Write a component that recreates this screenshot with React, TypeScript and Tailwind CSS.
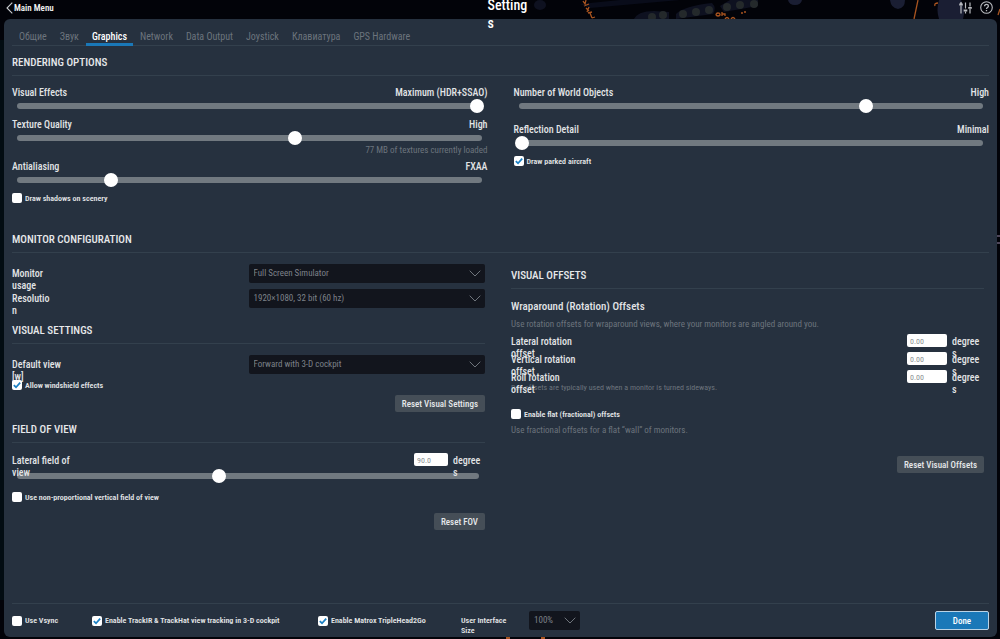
import { useId, useState, type ReactNode } from "react";

const tabs = ["Общие", "Звук", "Graphics", "Network", "Data Output", "Joystick", "Клавиатура", "GPS Hardware"];

function Heading({ children }: { children: ReactNode }) {
  return (
    <h2 className="flex h-[30px] items-center border-b border-[#33404d] pt-1.5 text-[11px] font-medium uppercase text-[#e6e8ea]">
      {children}
    </h2>
  );
}

function Track({ id, label, start }: { id?: string; label?: string; start: number }) {
  const [value, setValue] = useState(start);
  return (
    <div className="ml-px mr-1 grid h-3.5 items-center">
      <span className="col-start-1 row-start-1 ml-1 mr-0.5 h-1.5 rounded-full bg-[#717980]" />
      <input
        id={id}
        aria-label={label}
        type="range"
        min={0}
        max={1000}
        value={value}
        onChange={(e) => setValue(Number(e.target.value))}
        className="z-10 col-start-1 row-start-1 h-3.5 w-full appearance-none bg-transparent [&::-webkit-slider-thumb]:size-3.5 [&::-webkit-slider-thumb]:appearance-none [&::-webkit-slider-thumb]:rounded-full [&::-webkit-slider-thumb]:bg-white"
      />
    </div>
  );
}

function Slider({ label, value, start }: { label: string; value: string; start: number }) {
  const id = useId();
  return (
    <div>
      <div className="flex h-3.5 items-end justify-between text-[10px] font-medium leading-3 text-[#e2e4e6]">
        <label htmlFor={id}>{label}</label>
        <output htmlFor={id}>{value}</output>
      </div>
      <Track id={id} start={start} />
    </div>
  );
}

function Check({ label, on = false }: { label: string; on?: boolean }) {
  const [checked, setChecked] = useState(on);
  return (
    <label className="flex h-2.5 w-fit items-center gap-[3px] whitespace-nowrap text-[8px] font-semibold leading-[10px] text-[#e2e4e6]">
      <span className="grid size-2.5">
        <input
          type="checkbox"
          checked={checked}
          onChange={(e) => setChecked(e.target.checked)}
          className="col-start-1 row-start-1 size-2.5 appearance-none rounded-xs bg-white"
        />
        {checked && (
          <svg viewBox="0 0 10 10" className="pointer-events-none z-10 col-start-1 row-start-1 size-2.5" aria-hidden="true">
            <path d="M1.8 5.2 4 7.2 8.2 2.6" fill="none" stroke="#1b80c4" strokeWidth="1.7" />
          </svg>
        )}
      </span>
      <span className="pt-px">{label}</span>
    </label>
  );
}

function Drop({ id, value }: { id: string; value: string }) {
  return (
    <div className="grid h-[19px] items-center">
      <select
        id={id}
        className="col-start-1 row-start-1 h-[19px] w-full appearance-none rounded-xs bg-[#12151d] pl-[5px] pr-5 text-[9px] leading-[19px] text-[#7d8289]"
      >
        <option>{value}</option>
      </select>
      <svg viewBox="0 0 12 7" className="pointer-events-none z-10 col-start-1 row-start-1 mr-1 h-[7px] w-3 justify-self-end" aria-hidden="true">
        <path d="M.7.7 6 6 11.3.7" fill="none" stroke="#6f757c" strokeWidth="1" />
      </svg>
    </div>
  );
}

function SelectRow({ label, value }: { label: string; value: string }) {
  const id = useId();
  return (
    <div className="flex h-[25px] items-start justify-between">
      <label htmlFor={id} className="w-[54px] pt-1 text-[10px] font-medium leading-3 text-[#e2e4e6]">
        {label}
      </label>
      <div className="w-1/2">
        <Drop id={id} value={value} />
      </div>
    </div>
  );
}

function Degrees({ label, value, narrow = false }: { label: string; value: string; narrow?: boolean }) {
  const id = useId();
  return (
    <div
      className={
        narrow
          ? "relative z-20 flex h-4 items-start text-[10px] font-medium leading-3 text-[#e2e4e6]"
          : "flex h-[18px] items-start text-[10px] font-medium leading-3 text-[#e2e4e6]"
      }
    >
      <label htmlFor={id} className="w-[70px] pt-0.5">
        {label}
      </label>
      <input
        id={id}
        defaultValue={value}
        className={
          narrow
            ? "ml-auto h-[13px] w-[34px] rounded-xs bg-white px-[3px] pt-px text-[8px] font-normal text-[#8b8f93]"
            : "ml-auto h-[13px] w-10 rounded-xs bg-white px-[3px] pt-px text-[8px] font-normal text-[#8b8f93]"
        }
      />
      <span className="ml-[5px] w-8 pt-0.5">
        <span className="block w-[30px] wrap-anywhere">degrees</span>
      </span>
    </div>
  );
}

function Reset({ children }: { children: ReactNode }) {
  return (
    <button type="button" className="ml-auto block h-[17px] rounded-xs bg-[#454e57] px-[7px] text-[9px] font-medium leading-[18px] text-[#e6e8ea]">
      {children}
    </button>
  );
}

function Cockpit() {
  return (
    <svg viewBox="0 0 1000 639" preserveAspectRatio="none" className="absolute inset-0 size-full" aria-hidden="true">
      <rect width="1000" height="639" fill="#020309" />
      <path d="M0 40h4v560H0z" fill="#020c12" />
      <path d="M590 8 680 0h-60l-40 4z" fill="#090c1a" />
      <g fill="#0e1120">
        <ellipse cx="540" cy="5" rx="6" ry="5" />
        <path d="M634 19q4-8 20-8l15 1v7zM676 14q8-8 36-11 5 5 1 11l-37 5zM720 6l10-6h28v6l-34 6z" />
      </g>
      <g fill="#24292b">
        <circle cx="652" cy="17" r="4" />
        <circle cx="663" cy="15" r="4" />
        <circle cx="683" cy="14" r="4" />
        <circle cx="696" cy="12" r="4" />
        <circle cx="709" cy="10" r="4" />
        <circle cx="727" cy="7" r="4" />
        <circle cx="740" cy="5" r="4" />
        <circle cx="754" cy="4" r="4" />
      </g>
      <g fill="#1a1e33">
        <path d="M788 0h14q-1 5-7 5t-7-5zM890 0h15q0 8-7 9-7-1-8-9zM939 0h22q5 10 2 19h-24q-3-9 0-19z" />
      </g>
      <g fill="none" stroke="#a85420" strokeWidth="1.3">
        <path d="M583 1l2 3 1-4M584 6l5-2M586 8l3 3M589 7l-2 5M588 13l4-1M590 13l2 5M592 18l3-1" />
        <path d="M718 13a2 1.500 0 1 0 .1 0M722 16v-4M722 14h3v2M741 13h2M744 12h2M725 19q2-3 4 0M731 19q2-3 4 0" />
        <path d="M918 0l-4 19M935 6q-1-3 3-3M1000 9l-2 6" />
      </g>
      <path d="M996 236h4M997 243h3" stroke="#9b8bab" />
      <path d="M506 638h4M541 638h4" stroke="#a85420" strokeWidth="2" />
    </svg>
  );
}

export default function App() {
  return (
    <div className="relative flex min-h-screen flex-col bg-[#020309] pb-0.5 pl-1 pr-[3px] font-['Roboto_Condensed','Roboto',sans-serif] antialiased">
      <Cockpit />
      <header className="relative z-20 flex h-[19px] items-start">
        <a href="#main" className="flex h-4 flex-1 items-center gap-px pl-0.5 text-[9px] font-semibold text-[#f0f1f2]">
          <svg viewBox="0 0 7 12" className="h-3 w-[7px]" aria-hidden="true">
            <path d="M6.3.6 1 6l5.3 5.4" fill="none" stroke="#c9ccd0" strokeWidth="1.1" />
          </svg>
          <span className="pt-px">Main Menu</span>
        </a>
        <h1 className="-mt-1 w-6">
          <span className="block w-[42px] text-sm font-medium leading-[18px] text-white wrap-anywhere">Settings</span>
        </h1>
        <div className="flex h-[15px] flex-1 items-center justify-end gap-2 pr-1 text-[#b9bbc0]">
          <button type="button" aria-label="Quick settings">
            <svg viewBox="0 0 13 12" className="block h-3 w-[13px]" fill="none" stroke="currentColor" aria-hidden="true">
              <path d="M2 3.500V11.500M6.500 .5v6M6.500 9.500v2M11 .5v4M11 7v4.500" strokeWidth="1.200" />
              <path d="M2 .2v2M.2 2.500h3.600M4.700 8.500h3.600M9.200 5.800h3.600" strokeWidth="1.800" />
            </svg>
          </button>
          <button type="button" aria-label="Help">
            <svg viewBox="0 0 13 13" className="block size-[13px]" fill="none" stroke="currentColor" aria-hidden="true">
              <circle cx="6.500" cy="6.500" r="5.800" strokeWidth="1.100" />
              <path d="M4.600 5.200q0-1.900 1.900-1.900t1.900 1.700q0 .9-1 1.500-.9.600-.9 1.400M6.500 8.900v1.300" strokeWidth="1.300" />
            </svg>
          </button>
        </div>
      </header>

      <main id="main" className="relative z-10 flex flex-1 flex-col rounded-md bg-[#26313f] px-2">
        <nav className="flex h-[27px] gap-px border-b border-[#33404d] pl-px pt-[7px] text-[10px] text-[#6c747d]">
          {tabs.map((t) => (
            <a
              key={t}
              href="#main"
              className={
                t === "Graphics"
                  ? "h-5 border-b-3 border-[#1a78b8] px-1.5 leading-[21px] font-medium text-white"
                  : "h-5 px-1.5 leading-[21px]"
              }
            >
              {t}
            </a>
          ))}
        </nav>

        <Heading>Rendering Options</Heading>
        <div className="grid grid-cols-2 gap-[26px] pt-[9px] pb-5">
          <div>
            <Slider label="Visual Effects" value="Maximum (HDR+SSAO)" start={1000} />
            <div className="h-1" />
            <Slider label="Texture Quality" value="High" start={602} />
            <p className="mb-1 text-right text-[9px] leading-[10px] text-[#6c747d]">77 MB of textures currently loaded</p>
            <Slider label="Antialiasing" value="FXAA" start={200} />
            <div className="pt-1.5">
              <Check label="Draw shadows on scenery" />
            </div>
          </div>
          <div>
            <Slider label="Number of World Objects" value="High" start={754} />
            <div className="h-[9px]" />
            <Slider label="Reflection Detail" value="Minimal" start={0} />
            <div className="pt-1.5">
              <Check label="Draw parked aircraft" on />
            </div>
          </div>
        </div>

        <Heading>Monitor Configuration</Heading>
        <div className="grid grid-cols-2 gap-[26px] pr-[5px]">
          <div>
            <div className="h-[11px]" />
            <SelectRow label="Monitor usage" value="Full Screen Simulator" />
            <div className="flex h-[25px] items-start justify-between">
              <label htmlFor="resolution" className="pt-1 text-[10px] font-medium leading-3 text-[#e2e4e6]">
                <span className="block w-10 wrap-anywhere">Resolution</span>
              </label>
              <div className="w-1/2">
                <Drop id="resolution" value="1920×1080, 32 bit (60 hz)" />
              </div>
            </div>
            <Heading>Visual Settings</Heading>
            <div className="h-[11px]" />
            <SelectRow label="Default view [w]" value="Forward with 3-D cockpit" />
            <div className="relative z-10 pb-[5px]">
              <Check label="Allow windshield effects" on />
            </div>
            <Reset>Reset Visual Settings</Reset>
            <div className="h-px" />
            <Heading>Field of View</Heading>
            <div className="pt-2.5">
              <Degrees label="Lateral field of view" value="90.0" narrow />
              <Track label="Field of view" start={438} />
            </div>
            <div className="pt-[9px] pb-[11px]">
              <Check label="Use non-proportional vertical field of view" />
            </div>
            <Reset>Reset FOV</Reset>
          </div>

          <div>
            <div className="h-1.5" />
            <Heading>Visual Offsets</Heading>
            <h3 className="pt-2.5 text-[11px] font-medium leading-4 text-[#e2e4e6]">Wraparound (Rotation) Offsets</h3>
            <p className="pb-1 pt-[3px] text-[9px] leading-3 text-[#6c747d]">
              Use rotation offsets for wraparound views, where your monitors are angled around you.
            </p>
            <Degrees label="Lateral rotation offset" value="0.00" />
            <Degrees label="Vertical rotation offset" value="0.00" />
            <div className="relative z-10 h-[13px]">
              <Degrees label="Roll rotation offset" value="0.00" />
            </div>
            <p className="text-[8px] leading-[10px] text-[#6c747d]">Roll offsets are typically used when a monitor is turned sideways.</p>
            <div className="pt-4">
              <Check label="Enable flat (fractional) offsets" />
            </div>
            <p className="pb-5 pt-[5px] text-[9px] leading-3 text-[#6c747d]">Use fractional offsets for a flat “wall” of monitors.</p>
            <Reset>Reset Visual Offsets</Reset>
          </div>
        </div>

        <footer className="mt-auto flex h-[34px] items-center border-t border-[#33404d]">
          <div className="w-20">
            <Check label="Use Vsync" />
          </div>
          <div className="w-[226px]">
            <Check label="Enable TrackIR & TrackHat view tracking in 3-D cockpit" on />
          </div>
          <div className="w-[143px]">
            <Check label="Enable Matrox TripleHead2Go" on />
          </div>
          <label htmlFor="ui-size" className="w-[68px] pr-4 pt-2.5 text-[8px] font-semibold leading-[10px] text-[#e2e4e6]">
            User Interface Size
          </label>
          <div className="w-[51px]">
            <Drop id="ui-size" value="100%" />
          </div>
          <button type="button" className="ml-auto h-[19px] w-[54px] rounded-xs border border-[#b9d3e6] bg-[#1a78b8] text-[9px] font-medium leading-[18px] text-white">
            Done
          </button>
        </footer>
      </main>
    </div>
  );
}
